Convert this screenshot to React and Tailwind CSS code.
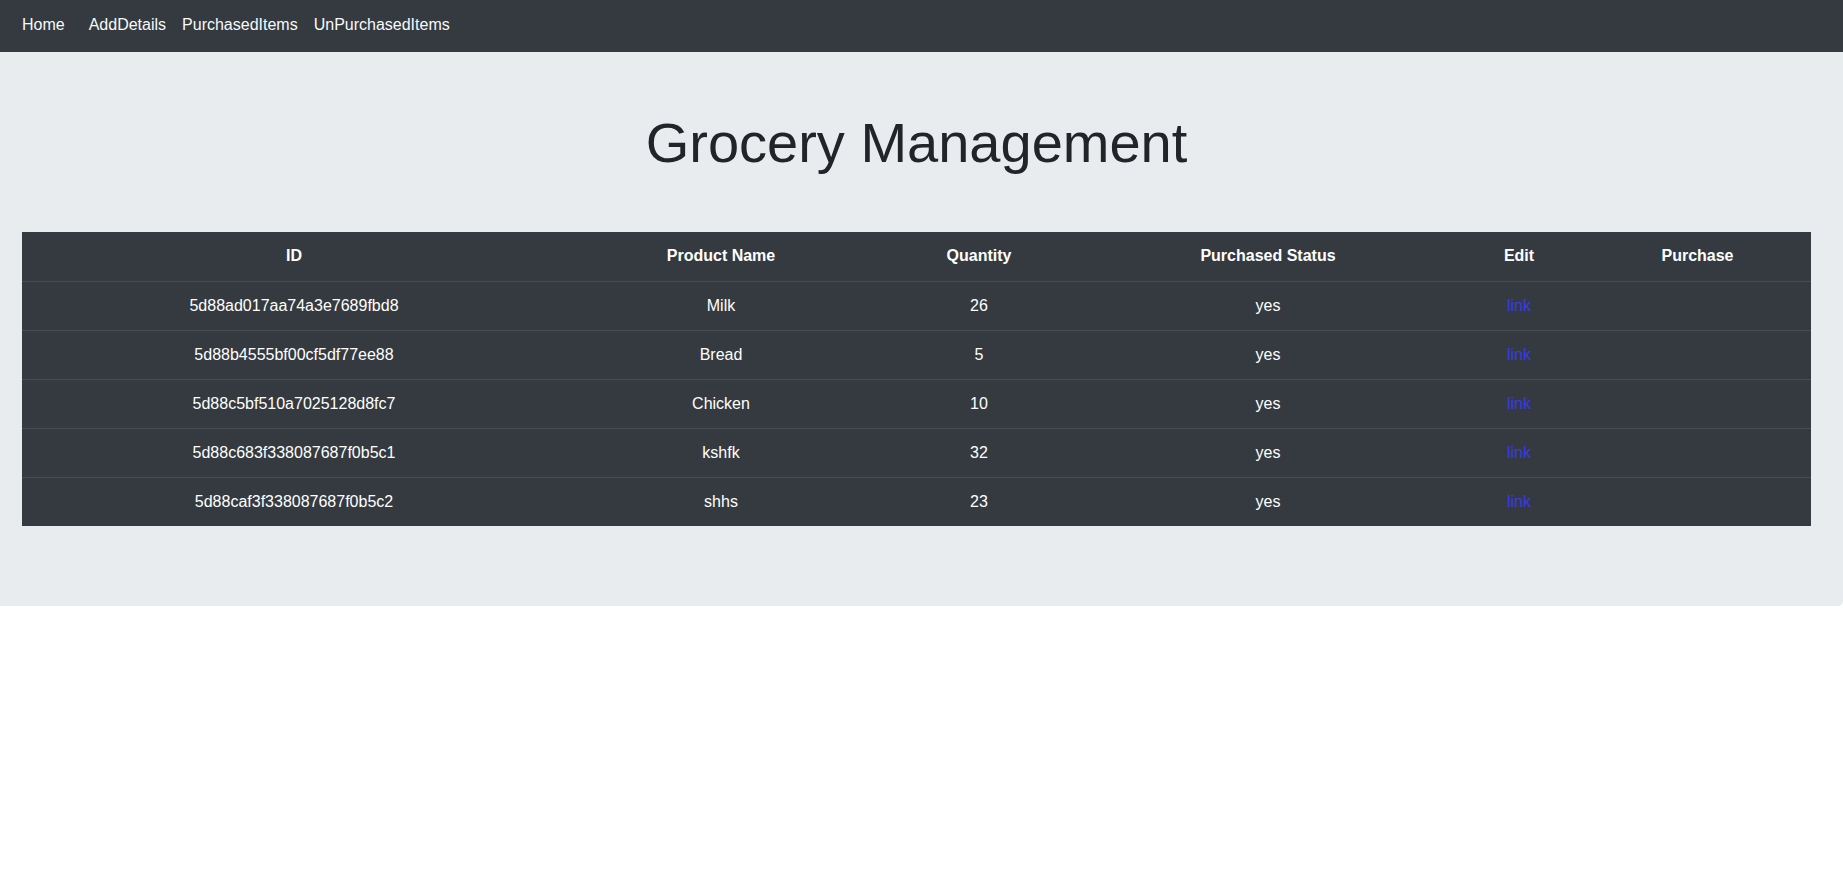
// Grocery list page — dark navbar, jumbotron header and the items table.
import React from 'react';

const items = [
  { id: '5d88ad017aa74a3e7689fbd8', name: 'Milk', qty: 26, status: 'yes' },
  { id: '5d88b4555bf00cf5df77ee88', name: 'Bread', qty: 5, status: 'yes' },
  { id: '5d88c5bf510a7025128d8fc7', name: 'Chicken', qty: 10, status: 'yes' },
  { id: '5d88c683f338087687f0b5c1', name: 'kshfk', qty: 32, status: 'yes' },
  { id: '5d88caf3f338087687f0b5c2', name: 'shhs', qty: 23, status: 'yes' },
];

function NavBar() {
  return (
    <nav className="h-[52px] bg-[#343a40] flex items-center pl-[22px] pb-[2px] text-[16px] text-[#f8f9fa]">
      <a href="#" className="mr-[24px]">Home</a>
      <a href="#" className="mr-[16px]">AddDetails</a>
      <a href="#" className="mr-[16px]">PurchasedItems</a>
      <a href="#">UnPurchasedItems</a>
    </nav>
  );
}

function ItemsTable() {
  return (
    <table className="w-[1789px] border-collapse bg-[#343a40] text-white text-[16px] text-center table-fixed">
      <colgroup>
        <col className="w-[544px]" />
        <col className="w-[310px]" />
        <col className="w-[206px]" />
        <col className="w-[372px]" />
        <col className="w-[130px]" />
        <col className="w-[227px]" />
      </colgroup>
      <thead>
        <tr className="h-[49px]">
          <th className="px-3 font-bold">ID</th>
          <th className="px-3 font-bold">Product Name</th>
          <th className="px-3 font-bold">Quantity</th>
          <th className="px-3 font-bold">Purchased Status</th>
          <th className="px-3 font-bold">Edit</th>
          <th className="px-3 font-bold">Purchase</th>
        </tr>
      </thead>
      <tbody>
        {items.map(it => (
          <tr key={it.id} className="h-[49px] border-t border-[#454d55]">
            <td className="px-3">{it.id}</td>
            <td className="px-3">{it.name}</td>
            <td className="px-3">{it.qty}</td>
            <td className="px-3">{it.status}</td>
            <td className="px-3"><a href="#" className="text-[#3a3ae8]">link</a></td>
            <td className="px-3"></td>
          </tr>
        ))}
      </tbody>
    </table>
  );
}

export default function App() {
  return (
    <div className="min-h-screen bg-white font-['Liberation_Sans',Arial,sans-serif]">
      <NavBar />
      <div className="bg-[#e9ecef] rounded-br-[5px] pt-[58px] pb-[80px] pl-[22px] pr-[32px]">
        <h1 className="text-center text-[56px] leading-[66px] font-normal text-[#212529] mb-[56px]">Grocery Management</h1>
        <ItemsTable />
      </div>
    </div>
  );
}
